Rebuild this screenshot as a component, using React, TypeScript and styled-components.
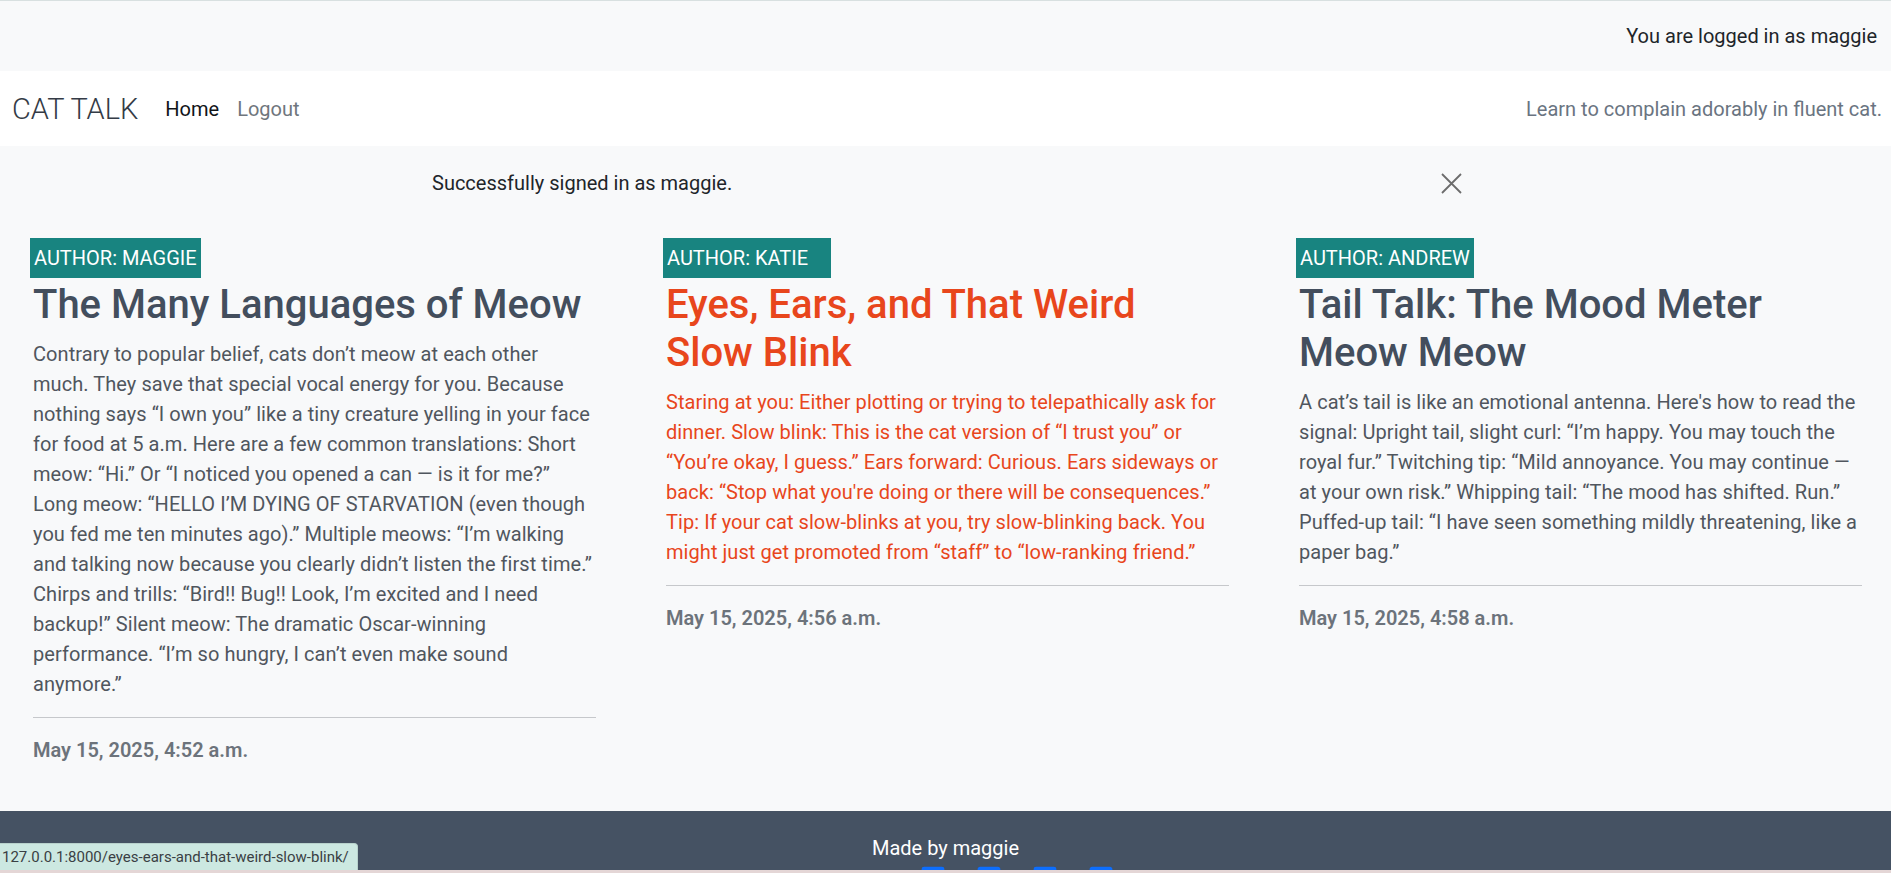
import React from 'react';
import styled, { createGlobalStyle } from 'styled-components';
import { FaFacebookSquare, FaTwitterSquare, FaInstagramSquare, FaYoutubeSquare } from 'react-icons/fa';

const GlobalStyle = createGlobalStyle`
  html, body { margin: 0; padding: 0; }
  * { box-sizing: border-box; }
  body {
    font-family: Roboto, "Liberation Sans", sans-serif;
    font-size: 20px;
    line-height: 30px;
    background: #f8f9fa;
    color: #212529;
  }
`;

const TopBar = styled.div`
  border-top: 1px solid #d8e0e0;
  background: #f8f9fa;
  height: 71px;
  display: flex;
  align-items: center;
  justify-content: flex-end;
  padding-right: 14px;
  color: #212529;
`;

const Navbar = styled.nav`
  background: #ffffff;
  height: 75px;
  display: flex;
  align-items: center;
  padding: 0 9px 0 12px;
`;

const Brand = styled.a`
  font-size: 29px;
  font-weight: 300;
  color: #343b46;
  margin-right: 18px;
  text-decoration: none;
`;

const NavLink = styled.a<{ $active?: boolean }>`
  color: ${(p) => (p.$active ? '#111418' : '#6f767d')};
  padding: 0 9px;
  text-decoration: none;
`;

const Tagline = styled.span`
  margin-left: auto;
  color: #6a7481;
`;

const Alert = styled.div`
  max-width: 1061px;
  margin: 0 auto;
  padding: 22px 17px 0;
  display: flex;
  align-items: center;
  justify-content: space-between;
  color: #212529;
`;

const CloseButton = styled.button`
  border: 0;
  background: transparent;
  padding: 0;
  width: 24px;
  height: 24px;
  margin-right: -4px;
  color: #6c6c6c;
  display: flex;
  align-items: center;
  justify-content: center;
  cursor: pointer;
`;

const Posts = styled.main`
  display: grid;
  grid-template-columns: repeat(3, 1fr);
  column-gap: 70px;
  padding: 40px 29px 46px 33px;
`;

const Card = styled.article<{ $hover?: boolean }>`
  color: ${(p) => (p.$hover ? '#e8461c' : '#50565e')};
`;

const Badge = styled.span`
  display: block;
  width: fit-content;
  min-width: 168px;
  margin-left: -3px;
  height: 40px;
  line-height: 40px;
  padding: 0 4px;
  background: #188480;
  color: #ffffff;
  font-size: 20px;
  text-transform: uppercase;
`;

const Title = styled.h2<{ $hover?: boolean }>`
  margin: 3px 0 10px;
  font-size: 40px;
  line-height: 48px;
  font-weight: 500;
  color: ${(p) => (p.$hover ? '#e8461c' : '#434e5d')};
`;

const Body = styled.p`
  margin: 0 0 18px;
  letter-spacing: 0.06px;
`;

const Rule = styled.hr`
  border: 0;
  border-top: 1px solid #c6c8cb;
  margin: 0 0 17px;
`;

const Date = styled.p`
  margin: 0;
  font-weight: 600;
  color: #6c737b;
`;

const Footer = styled.footer`
  background: #455263;
  color: #ffffff;
  text-align: center;
  padding: 22px 0 20px;
`;

const Socials = styled.div`
  display: flex;
  justify-content: center;
  align-items: center;
  gap: 30px;
  margin-top: 2px;
  padding-left: 142px;
  font-size: 26px;
`;

const SocialIcon = styled.a`
  color: #0d6efd;
  display: flex;
  line-height: 0;
`;

const StatusBubble = styled.div`
  position: fixed;
  left: 0;
  bottom: 3px;
  height: 27px;
  padding: 0 8px 0 2px;
  background: #cce8e1;
  border: 1px solid #b8d2cc;
  border-left: 0;
  border-bottom: 0;
  border-top-right-radius: 4px;
  color: #3a3f44;
  font-size: 15px;
  line-height: 27px;
  white-space: nowrap;
`;

const WindowEdge = styled.div`
  position: fixed;
  left: 0;
  right: 0;
  bottom: 0;
  height: 3px;
  background: #e4d6d6;
`;

const posts = [
  {
    author: 'maggie',
    title: 'The Many Languages of Meow',
    body: 'Contrary to popular belief, cats don’t meow at each other much. They save that special vocal energy for you. Because nothing says “I own you” like a tiny creature yelling in your face for food at 5 a.m. Here are a few common translations: Short meow: “Hi.” Or “I noticed you opened a can — is it for me?” Long meow: “HELLO I’M DYING OF STARVATION (even though you fed me ten minutes ago).” Multiple meows: “I’m walking and talking now because you clearly didn’t listen the first time.” Chirps and trills: “Bird!! Bug!! Look, I’m excited and I need backup!” Silent meow: The dramatic Oscar-winning performance. “I’m so hungry, I can’t even make sound anymore.”',
    date: 'May 15, 2025, 4:52 a.m.',
    hover: false,
  },
  {
    author: 'katie',
    title: 'Eyes, Ears, and That Weird Slow Blink',
    body: 'Staring at you: Either plotting or trying to telepathically ask for dinner. Slow blink: This is the cat version of “I trust you” or “You’re okay, I guess.” Ears forward: Curious. Ears sideways or back: “Stop what you\'re doing or there will be consequences.” Tip: If your cat slow-blinks at you, try slow-blinking back. You might just get promoted from “staff” to “low-ranking friend.”',
    date: 'May 15, 2025, 4:56 a.m.',
    hover: true,
  },
  {
    author: 'andrew',
    title: 'Tail Talk: The Mood Meter Meow Meow',
    body: 'A cat’s tail is like an emotional antenna. Here\'s how to read the signal: Upright tail, slight curl: “I’m happy. You may touch the royal fur.” Twitching tip: “Mild annoyance. You may continue — at your own risk.” Whipping tail: “The mood has shifted. Run.” Puffed-up tail: “I have seen something mildly threatening, like a paper bag.”',
    date: 'May 15, 2025, 4:58 a.m.',
    hover: false,
  },
];

export default function App() {
  return (
    <>
      <GlobalStyle />
      <TopBar>You are logged in as maggie</TopBar>
      <Navbar>
        <Brand href="#">CAT TALK</Brand>
        <NavLink $active href="#">Home</NavLink>
        <NavLink href="#">Logout</NavLink>
        <Tagline>Learn to complain adorably in fluent cat.</Tagline>
      </Navbar>
      <Alert>
        <span>Successfully signed in as maggie.</span>
        <CloseButton aria-label="Close">
          <svg width="21" height="21" viewBox="0 0 21 21" fill="none" stroke="currentColor" strokeWidth="1.8">
            <path d="M1 1L20 20M20 1L1 20" />
          </svg>
        </CloseButton>
      </Alert>
      <Posts>
        {posts.map((p) => (
          <Card key={p.author} $hover={p.hover}>
            <Badge>Author: {p.author}</Badge>
            <Title $hover={p.hover}>{p.title}</Title>
            <Body>{p.body}</Body>
            <Rule />
            <Date>{p.date}</Date>
          </Card>
        ))}
      </Posts>
      <Footer>
        <div>Made by maggie</div>
        <Socials>
          <SocialIcon href="#" aria-label="Facebook"><FaFacebookSquare /></SocialIcon>
          <SocialIcon href="#" aria-label="Twitter"><FaTwitterSquare /></SocialIcon>
          <SocialIcon href="#" aria-label="Instagram"><FaInstagramSquare /></SocialIcon>
          <SocialIcon href="#" aria-label="YouTube"><FaYoutubeSquare /></SocialIcon>
        </Socials>
      </Footer>
      <StatusBubble>127.0.0.1:8000/eyes-ears-and-that-weird-slow-blink/</StatusBubble>
      <WindowEdge />
    </>
  );
}
